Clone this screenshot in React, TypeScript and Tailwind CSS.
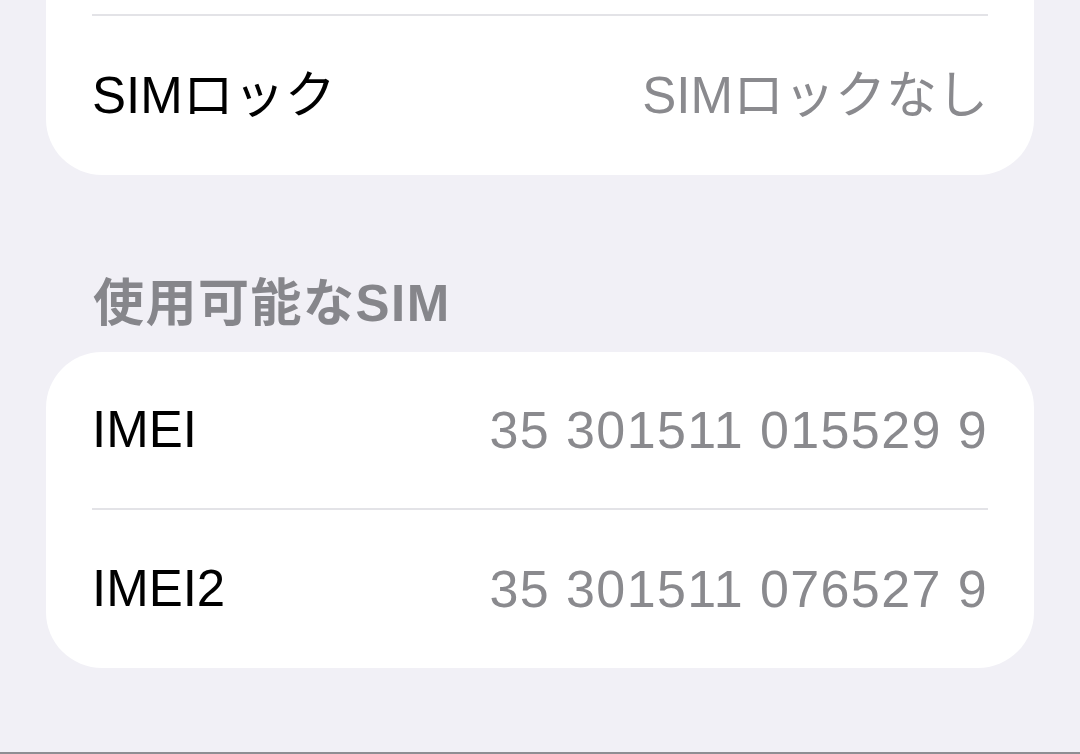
const font = {
  fontFamily: '"Liberation Sans", "Noto Sans CJK JP", sans-serif',
};

function Row({
  label,
  value,
  h,
  digits,
}: {
  label: string;
  value: string;
  h: string;
  digits?: boolean;
}) {
  return (
    <div className={`flex items-center justify-between px-[46px] ${h}`}>
      <span className="text-[51px] leading-[60px] text-black">{label}</span>
      <span
        className={
          digits
            ? "text-[52px] leading-[60px] tracking-[1.4px] text-[#8a8a8e]"
            : "text-[51px] leading-[60px] text-[#8a8a8e]"
        }
      >
        {value}
      </span>
    </div>
  );
}

function Divider() {
  return <div className="mx-[46px] h-[2px] bg-[#e3e3e7]" />;
}

export default function App() {
  return (
    <div
      className="flex h-[754px] w-[1080px] flex-col overflow-hidden bg-[#f1f0f6]"
      style={font}
    >
      {/* Card continuing from above */}
      <div className="mx-[46px] rounded-b-[56px] bg-white">
        <div className="h-[14px]" />
        <Divider />
        <Row label="SIMロック" value="SIMロックなし" h="h-[159px]" />
      </div>

      {/* Section header */}
      <div className="h-[177px] px-[93px] pt-[99px]">
        <div className="text-[51px] font-semibold leading-[60px] tracking-[1.5px] text-[#86868b]">
          使用可能なSIM
        </div>
      </div>

      <div className="mx-[46px] rounded-[56px] bg-white">
        <Row label="IMEI" value="35 301511 015529 9" h="h-[156px]" digits />
        <Divider />
        <Row label="IMEI2" value="35 301511 076527 9" h="h-[158px]" digits />
      </div>

      <div className="flex-1" />
      <div className="h-[2px] bg-[#8e8e93]" />
    </div>
  );
}
